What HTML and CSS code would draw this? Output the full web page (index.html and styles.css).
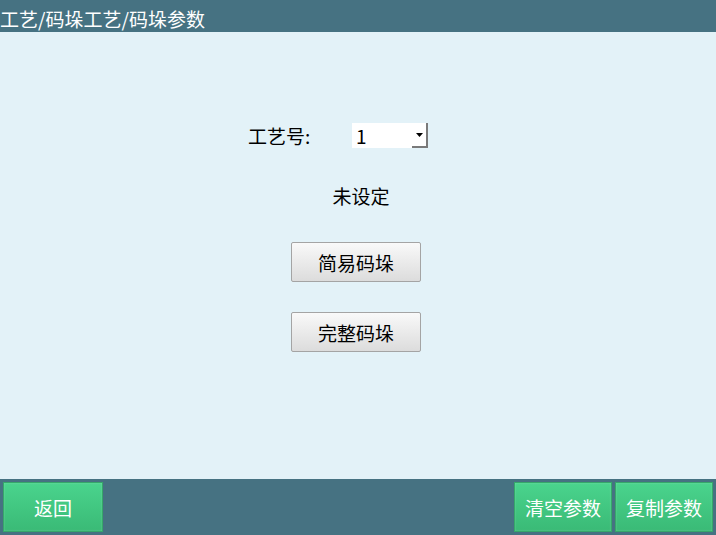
FILE: index.html
```html
<!DOCTYPE html>
<html lang="zh">
<head>
<meta charset="utf-8">
<link rel="stylesheet" href="styles.css">
</head>
<body>
<div class="app">
  <header class="titlebar">工艺/码垛工艺/码垛参数</header>
  <main class="content">
    <div class="field-row">
      <span class="field-label">工艺号:</span>
      <div class="select">
        <span class="select-value">1</span>
        <span class="select-arrow"><svg width="7" height="4" viewBox="0 0 7 4"><path d="M0 0H7L3.5 4Z" fill="#000"/></svg></span>
      </div>
    </div>
    <div class="status">未设定</div>
    <button class="btn">简易码垛</button>
    <button class="btn btn-second">完整码垛</button>
  </main>
  <footer class="footer">
    <button class="gbtn gbtn-back">返回</button>
    <div class="spacer"></div>
    <button class="gbtn">清空参数</button>
    <button class="gbtn">复制参数</button>
  </footer>
</div>
</body>
</html>
```
FILE: styles.css
```css
html, body {
  margin: 0;
  padding: 0;
}
body {
  font-family: "Noto Sans CJK SC", "Noto Sans", sans-serif;
  background: #e3f2f8;
}
.app {
  width: 716px;
  height: 535px;
  display: flex;
  flex-direction: column;
}
.titlebar {
  height: 32px;
  background: #467282;
  color: #ffffff;
  font-size: 19px;
  line-height: 20px;
  padding-top: 9px;
  box-sizing: border-box;
  white-space: nowrap;
}
.content {
  flex: 1;
  display: flex;
  flex-direction: column;
  align-items: center;
  padding-top: 91px;
  box-sizing: border-box;
  background: #e3f2f8;
}
.field-row {
  display: flex;
  align-items: center;
  align-self: flex-start;
  margin-left: 248px;
  height: 25px;
}
.field-label {
  width: 104px;
  font-size: 19px;
  line-height: 25px;
  color: #000;
}
.select {
  width: 76px;
  height: 25px;
  background: #fff;
  display: flex;
  box-sizing: border-box;
}
.select-value {
  flex: 1;
  font-size: 19px;
  line-height: 25px;
  padding-left: 4px;
  color: #000;
}
.select-arrow {
  width: 16px;
  height: 25px;
  box-sizing: border-box;
  border-right: 2px solid #7a7a7a;
  border-bottom: 2px solid #7a7a7a;
  display: flex;
  align-items: center;
  justify-content: center;
  padding-top: 1px;
}
.status {
  margin-top: 36px;
  font-size: 19px;
  line-height: 24px;
  color: #000;
  margin-left: 6px;
}
.btn {
  margin-top: 34px;
  width: 130px;
  height: 40px;
  border: 1px solid #a4a4a4;
  border-radius: 2px;
  background: linear-gradient(#f9f9f9, #dcdcdc);
  font-family: inherit;
  font-size: 19px;
  color: #000;
  padding: 0;
  margin-left: -4px;
}
.btn-second {
  margin-top: 30px;
}
.footer {
  height: 56px;
  background: #467282;
  display: flex;
  gap: 3px;
  padding: 3px;
  box-sizing: border-box;
}
.spacer {
  flex: 1;
}
.gbtn {
  width: 98px;
  height: 50px;
  border: 1px solid #36a76a;
  background: linear-gradient(#4ad48d, #3aba76);
  box-shadow: inset 0 0 2px rgba(255,255,255,0.25);
  color: #fff;
  font-family: inherit;
  font-size: 19px;
  padding: 0;
}
.gbtn-back {
  width: 100px;
}
```
